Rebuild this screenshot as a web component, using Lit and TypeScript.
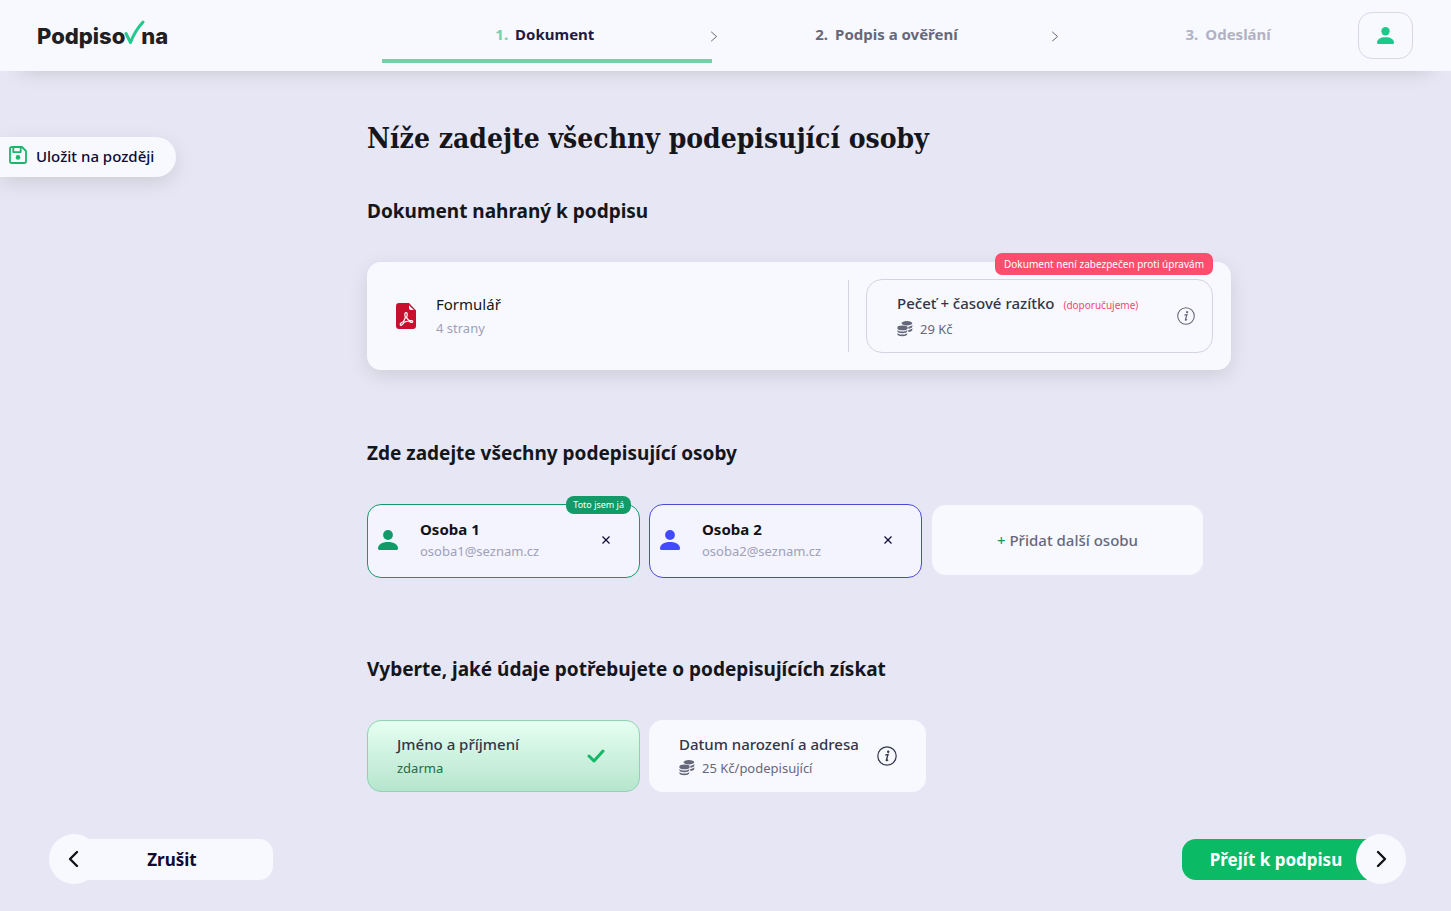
import { LitElement, html, css, svg } from "lit";
import { customElement, state } from "lit/decorators.js";
import { classMap } from "lit/directives/class-map.js";

interface Person {
  name: string;
  email: string;
  tone: string;
  me: boolean;
}

const personIcon = (size: number) => html`
  <svg width=${size} height=${size} viewBox="0 0 20 20" fill="currentColor" aria-hidden="true">
    <circle cx="10" cy="5" r="4.9" />
    <path d="M0 18.6C0 14.4 4 12 10 12s10 2.400 10 6.600c0 .9-.5 1.400-1.400 1.400H1.400C.5 20 0 19.500 0 18.600Z" />
  </svg>
`;

const chevron = html`
  <svg width="8" height="11" viewBox="0 0 8 11" fill="none" stroke="currentColor">
    <path d="M1.200.8 6.600 5.500 1.200 10.200" />
  </svg>
`;

const infoIcon = (size: number) => html`
  <svg class="info" width=${size} height=${size} viewBox="0 0 20 20" fill="none" stroke="currentColor" aria-hidden="true">
    <circle cx="10" cy="10" r="9.200" stroke-width="1.200" />
    <circle cx="11.200" cy="5.700" r="1.200" fill="currentColor" stroke="none" />
    <path d="M8.300 9.100 11 8.500 9.400 14.100c-.2.8.5.8 1.700-.4" stroke-width="1.400" />
  </svg>
`;

const coinLayer = (x: number, y: number) => svg`
  <path transform="translate(${x} ${y})" d="M0 0c0 1.100 2.200 1.800 4.900 1.800S9.800 1.100 9.800 0v1.500c0 1.200-2.200 2-4.900 2S0 2.700 0 1.500Z" />
`;

const coinsIcon = html`
  <svg width="16" height="16" viewBox="0 0 16 16" fill="currentColor" aria-hidden="true">
    <ellipse cx="9.900" cy="2.300" rx="5.400" ry="2.200" />
    <path d="M11.300 5.700c2.200-.2 3.700-.9 4-1.900v1.900c0 1-1.700 1.800-4 2ZM11.300 8.900c2.200-.2 3.700-.9 4-1.900v1.900c0 1-1.700 1.800-4 2Z" />
    <ellipse cx="5.500" cy="6.900" rx="5.200" ry="2.300" />
    ${coinLayer(0.400, 8.700)} ${coinLayer(0.400, 11.700)}
  </svg>
`;

const pdfIcon = html`
  <svg width="20" height="26" viewBox="0 0 20 26" aria-hidden="true">
    <path fill="#c8102e" d="M3 0h10v4.500C13 6.300 14.200 7.400 16 7.400h4V23c0 1.900-1.100 3-3 3H3c-1.900 0-3-1.100-3-3V3c0-1.900 1.100-3 3-3Z" />
    <path fill="#c8102e" d="M13 0 20 7.400V9h-4.500C13.800 9 12 7.500 12 5.500V0Z" />
    <path fill="#f8f9ff" d="M13 2.200 17.800 7H15c-1.300 0-2-.8-2-2Z" />
    <path fill="none" stroke="#fff" stroke-width="1.200" stroke-linejoin="round"
      d="M10.100 9.600c1.600 0 1.200 3 .5 5 .9 1.700 2 2.700 3.200 3.100 2.600-.5 3.200.3 2.900 1.100-.4 1.200-2.300.5-3.800-.8-1.700.2-3.300.6-4.800 1.200-1.500 2.500-3 3.600-3.700 2.800-.8-1 .7-2.500 3.100-3.500 1-1.700 1.500-3.100 1.900-4.300-.8-2.200-.9-4.600.7-4.600Z" />
  </svg>
`;

const saveIcon = html`
  <svg width="18" height="18" viewBox="0 0 18 18" fill="none" stroke="currentColor" stroke-width="1.800" stroke-linejoin="round" aria-hidden="true">
    <path d="M3 1h10l4 4v10.200c0 1.200-.6 1.800-1.800 1.800H2.800C1.600 17 1 16.400 1 15.200V2.800C1 1.600 1.600 1 3 1Z" />
    <path d="M4.300 1.200v4.900h7.400V1.200" />
    <circle cx="9" cy="11.400" r="2.300" fill="currentColor" stroke="none" />
  </svg>
`;

const arrow = (d: string) => html`
  <svg width="12" height="18" viewBox="0 0 12 18" fill="none" stroke="currentColor" stroke-width="2.400" stroke-linecap="round" stroke-linejoin="round" aria-hidden="true">
    <path d=${d} />
  </svg>
`;

@customElement("app-root")
export class AppRoot extends LitElement {
  @state() private people: Person[] = [
    { name: "Osoba 1", email: "osoba1@seznam.cz", tone: "green", me: true },
    { name: "Osoba 2", email: "osoba2@seznam.cz", tone: "blue", me: false },
  ];

  @state() private nameSelected = true;

  static styles = css`
    :host {
      display: flex;
      flex-direction: column;
      min-height: 100vh;
      background: #e6e6f4;
      color: #14161c;
      font-family: "Noto Sans", "Open Sans", sans-serif;
      font-size: 15px;
      line-height: 20px;
    }
    * { box-sizing: border-box; }
    svg { display: block; flex: none; }
    button { font: inherit; color: inherit; border: 0; padding: 0; margin: 0; background: none; text-align: left; cursor: pointer; }
    a { color: inherit; text-decoration: none; }
    h1, h2, h3, p, ol, ul { margin: 0; padding: 0; }
    li { list-style: none; }

    .header {
      display: flex;
      align-items: center;
      height: 71px;
      padding-right: 38px;
      background: #f8f9ff;
      box-shadow: 0 20px 20px -20px rgba(0, 0, 0, 0.15);
    }
    .brand { width: 382px; padding-left: 37px; }
    .logo {
      display: inline-flex;
      align-items: center;
      font: 800 22px/28px "Inter", sans-serif;
      color: #1f2024;
    }
    .logo svg { margin: -6px -4px 0 -1px; }
    .steps { display: flex; flex: 1; align-self: stretch; gap: 12px; }
    .step { position: relative; display: flex; flex: 1 1 0; }
    .step a {
      display: flex;
      flex: 1;
      justify-content: center;
      gap: 7px;
      margin-bottom: 8px;
      padding: 24px 4px 0 0;
      border-bottom: 4px solid transparent;
      font-weight: 700;
      color: #66687a;
    }
    .step.active a { border-color: #76cfa6; color: #1f1b3d; }
    .step.active .number { color: #76cfa6; }
    .step.later a { color: #b1b2c3; }
    .chevron { position: absolute; top: 31px; right: -6px; color: #66687a; }
    .account {
      display: grid;
      place-items: center;
      width: 55px;
      height: 47px;
      margin-left: -37px;
      border: 1px solid #d7d8e3;
      border-radius: 14px;
      color: #1cc88a;
    }

    .body { display: grid; grid-template-columns: 367px minmax(0, 864px); flex: 1; }
    .side { display: flex; align-items: flex-start; padding-top: 66px; }
    .save {
      display: flex;
      align-items: center;
      gap: 9px;
      height: 40px;
      padding: 0 22px 2px 9px;
      border-radius: 0 20px 20px 0;
      background: #f8f9ff;
      box-shadow: 0 6px 20px rgba(0, 0, 0, 0.1);
      font-weight: 500;
      color: #0d0a33;
    }
    .save svg { color: #1cb56c; margin-bottom: 3px; }

    h1 { margin-top: 48px; font: 700 28px/40px "DejaVu Serif Condensed", "DejaVu Serif", serif; }
    h2 { font-size: 19px; line-height: 28px; font-weight: 700; margin-bottom: 37px; }
    section { margin-top: 69px; }
    section.first { margin-top: 38px; }

    .document {
      display: flex;
      align-items: center;
      padding: 17px 18px 17px 29px;
      border-radius: 14px;
      background: #f8f9ff;
      box-shadow: 0 6px 20px rgba(0, 0, 0, 0.1);
    }
    .file { display: flex; align-items: center; flex: 1; gap: 20px; }
    .title { font-size: 15px; line-height: 24px; font-weight: 400; }
    .sub { font-size: 13px; line-height: 24px; color: #9fa1b5; }
    .seal-wrap { position: relative; padding-left: 17px; }
    .seal-wrap::before { content: ""; position: absolute; left: -1px; top: 1px; bottom: 1px; width: 1px; background: #d3d4df; }
    .seal {
      display: flex;
      align-items: center;
      justify-content: space-between;
      width: 347px;
      height: 74px;
      padding: 0 17px 0 30px;
      border: 1px solid #d3d4df;
      border-radius: 16px;
    }
    .seal .info { color: #66687a; }
    .option-title { display: block; font-weight: 500; line-height: 24px; color: #333548; }
    .recommended { margin-left: 5px; font-size: 10px; font-weight: 400; color: #f5476a; }
    .price { display: flex; align-items: center; gap: 7px; font-size: 13px; line-height: 24px; color: #66687a; }
    .badge {
      position: absolute;
      top: -26px;
      right: 0;
      padding: 0 9px;
      border-radius: 7px;
      background: #ff4d6d;
      color: #fff;
      font-size: 10px;
      line-height: 22px;
      white-space: nowrap;
    }

    .people { display: flex; gap: 9px; min-height: 82px; align-items: flex-start; }
    .person {
      position: relative;
      display: flex;
      align-items: center;
      width: 273px;
      height: 74px;
      padding: 0 28px 2px 10px;
      border: 1px solid currentColor;
      border-radius: 14px;
      background: #f3f4ff;
    }
    .person.green { color: #129b68; }
    .person.blue { color: #4a4bd0; }
    .person.blue > svg { color: #4349ff; }
    .who { flex: 1; margin-left: 22px; }
    .who h3 { font-size: 15px; line-height: 22px; color: #111216; }
    .who p { font-size: 13px; line-height: 22px; color: #9fa1b5; }
    .remove { display: grid; place-items: center; width: 10px; height: 24px; color: #0d0a33; }
    .me {
      position: absolute;
      top: -9px;
      right: 8px;
      padding: 0 7px;
      border-radius: 8px;
      background: #129b68;
      color: #fff;
      font-size: 9px;
      line-height: 18px;
    }
    .add {
      width: 271px;
      height: 70px;
      margin: 1px 0 0 1px;
      border-radius: 14px;
      background: #f8f9ff;
      text-align: center;
      font-weight: 500;
      color: #66687a;
    }
    .add span { color: #129b68; }

    .options { display: flex; gap: 9px; }
    .option {
      display: flex;
      align-items: center;
      justify-content: space-between;
      min-width: 273px;
      height: 72px;
      padding: 0 28px 0 29px;
      gap: 18px;
      border: 1px solid transparent;
      border-radius: 14px;
      background: #f8f9ff;
    }
    .option.selected { padding-right: 34px; border-color: #8fd3b0; background: linear-gradient(#e6fff2, #b6e5cd); }
    .option.selected .price { color: #1e6b4b; }
    .option .info { color: #333548; }

    .footer { display: flex; justify-content: space-between; padding: 24px 45px 27px 49px; }
    .action { display: flex; align-items: center; font-weight: 700; font-size: 17px; }
    .circle { position: relative; display: grid; place-items: center; width: 50px; height: 50px; border-radius: 50%; background: #f8f9ff; color: #111216; }
    .pill { height: 41px; line-height: 41px; text-align: center; }
    .cancel .pill { width: 199px; margin-left: -25px; padding-right: 3px; border-radius: 0 14px 14px 0; background: #f8f9ff; color: #0d0a33; }
    .next .pill { width: 199px; margin-right: -25px; padding-right: 11px; border-radius: 14px 0 0 14px; background: #0aba65; color: #fff; }
  `;

  private removePerson(person: Person) {
    this.people = this.people.filter((p) => p !== person);
  }

  private renderPerson(person: Person) {
    return html`
      <li class="person ${person.tone}">
        ${personIcon(20)}
        <div class="who">
          <h3>${person.name}</h3>
          <p>${person.email}</p>
        </div>
        <button class="remove" aria-label="Odebrat" @click=${() => this.removePerson(person)}>
          <svg width="8" height="8" viewBox="0 0 8 8" stroke="currentColor" stroke-width="1.200" aria-hidden="true"><path d="M.5.5l7 7M7.500.5l-7 7" /></svg>
        </button>
        ${person.me ? html`<span class="me">Toto jsem já</span>` : null}
      </li>
    `;
  }

  render() {
    return html`
      <header class="header">
        <div class="brand">
          <a class="logo" href="#" aria-label="Podpisovna">
            <span>Podpiso</span>
            <svg width="21" height="25" viewBox="0 0 21 25" fill="none" stroke="#22c98b" stroke-width="3" stroke-linecap="round" stroke-linejoin="round" aria-hidden="true">
              <path d="M2 13.500 6.500 22.500C9.500 14.500 13.500 8 19 2" />
            </svg>
            <span>na</span>
          </a>
        </div>
        <ol class="steps">
          <li class="step active">
            <a href="#" aria-current="step"><span class="number">1.</span><span>Dokument</span></a>
            <span class="chevron" aria-hidden="true">${chevron}</span>
          </li>
          <li class="step">
            <a href="#"><span>2.</span><span>Podpis a ověření</span></a>
            <span class="chevron" aria-hidden="true">${chevron}</span>
          </li>
          <li class="step later"><a href="#"><span>3.</span><span>Odeslání</span></a></li>
        </ol>
        <button class="account" aria-label="Účet">${personIcon(17)}</button>
      </header>

      <div class="body">
        <aside class="side">
          <button class="save">${saveIcon}<span>Uložit na později</span></button>
        </aside>
        <main>
          <h1>Níže zadejte všechny podepisující osoby</h1>

          <section class="first">
            <h2>Dokument nahraný k podpisu</h2>
            <div class="document">
              <div class="file">
                ${pdfIcon}
                <div>
                  <h3 class="title">Formulář</h3>
                  <p class="sub">4 strany</p>
                </div>
              </div>
              <div class="seal-wrap">
                <button class="seal">
                  <span>
                    <span class="option-title">Pečeť + časové razítko <span class="recommended">(doporučujeme)</span></span>
                    <span class="price">${coinsIcon}29 Kč</span>
                  </span>
                  ${infoIcon(18)}
                </button>
                <span class="badge">Dokument není zabezpečen proti úpravám</span>
              </div>
            </div>
          </section>

          <section>
            <h2>Zde zadejte všechny podepisující osoby</h2>
            <ul class="people">
              ${this.people.map((p) => this.renderPerson(p))}
              <li><button class="add"><span>+</span> Přidat další osobu</button></li>
            </ul>
          </section>

          <section>
            <h2>Vyberte, jaké údaje potřebujete o podepisujících získat</h2>
            <div class="options">
              <button
                class=${classMap({ option: true, selected: this.nameSelected })}
                aria-pressed=${this.nameSelected}
                @click=${() => (this.nameSelected = !this.nameSelected)}
              >
                <span>
                  <span class="option-title">Jméno a příjmení</span>
                  <span class="price">zdarma</span>
                </span>
                <svg width="18" height="14" viewBox="0 0 18 14" fill="none" stroke="#14b866" stroke-width="3" stroke-linecap="round" stroke-linejoin="round" aria-hidden="true"><path d="M2 7l5 5 9-10" /></svg>
              </button>
              <button class="option" aria-pressed="false">
                <span>
                  <span class="option-title">Datum narození a adresa</span>
                  <span class="price">${coinsIcon}25 Kč/podepisující</span>
                </span>
                ${infoIcon(20)}
              </button>
            </div>
          </section>
        </main>
      </div>

      <footer class="footer">
        <button class="action cancel">
          <span class="circle">${arrow("M9 2 2 9l7 7")}</span>
          <span class="pill">Zrušit</span>
        </button>
        <button class="action next">
          <span class="pill">Přejít k podpisu</span>
          <span class="circle">${arrow("M3 2l7 7-7 7")}</span>
        </button>
      </footer>
    `;
  }
}
